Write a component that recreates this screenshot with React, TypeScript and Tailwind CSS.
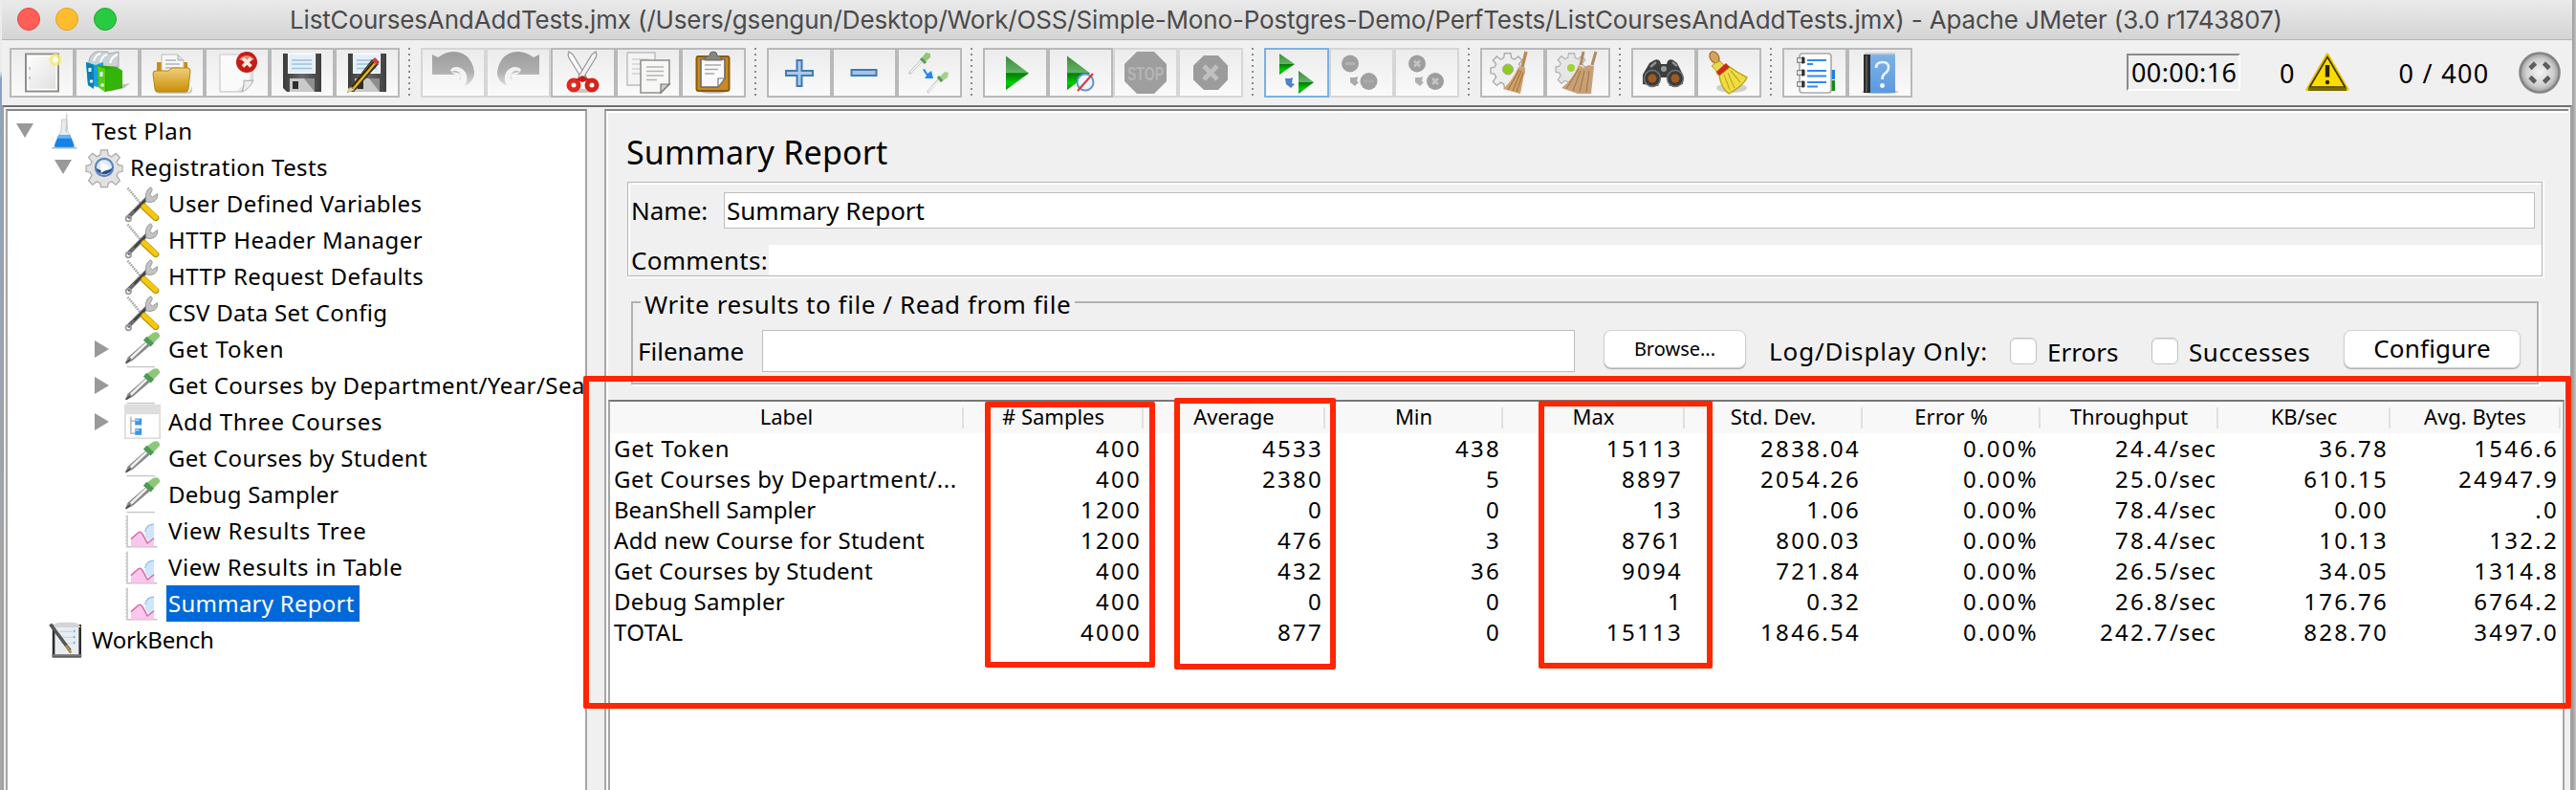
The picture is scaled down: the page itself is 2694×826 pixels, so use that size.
import type { ReactNode } from "react";

function Svg({ children, className = "w-[44px] h-[44px]" }: { children: ReactNode; className?: string }) {
  return (
    <svg viewBox="0 0 44 44" className={`${className} shrink-0 block overflow-visible`} fill="none">
      {children}
    </svg>
  );
}

function Defs() {
  return (
    <svg width="0" height="0" className="absolute">
      <defs>
        <linearGradient id="gold" x1="0" y1="0" x2="0" y2="1">
          <stop offset="0" stopColor="#f0cf7c" /><stop offset="1" stopColor="#c98f06" />
        </linearGradient>
        <linearGradient id="play" x1="0" y1="0" x2="0" y2="1">
          <stop offset="0" stopColor="#3d8a3d" /><stop offset="0.48" stopColor="#5fb463" />
          <stop offset="0.52" stopColor="#067a06" /><stop offset="0.8" stopColor="#00d000" /><stop offset="1" stopColor="#0a8a0a" />
        </linearGradient>
        <linearGradient id="dark" x1="0" y1="0" x2="1" y2="0">
          <stop offset="0" stopColor="#3a3a3a" /><stop offset="0.5" stopColor="#6a6a6a" /><stop offset="1" stopColor="#3f3f3f" />
        </linearGradient>
        <linearGradient id="paper" x1="0" y1="0" x2="1" y2="1">
          <stop offset="0" stopColor="#ffffff" /><stop offset="1" stopColor="#dedede" />
        </linearGradient>
        <linearGradient id="gray" x1="0" y1="0" x2="0" y2="1">
          <stop offset="0" stopColor="#9d9d9d" /><stop offset="0.6" stopColor="#b0b0b0" /><stop offset="1" stopColor="#dedede" />
        </linearGradient>
        <linearGradient id="blue" x1="0" y1="0" x2="0" y2="1">
          <stop offset="0" stopColor="#7fb2e6" /><stop offset="1" stopColor="#5a9ae0" />
        </linearGradient>
        <radialGradient id="ball">
          <stop offset="0" stopColor="#f4f4f4" /><stop offset="0.7" stopColor="#cfcfcf" /><stop offset="1" stopColor="#9a9a9a" />
        </radialGradient>
      </defs>
    </svg>
  );
}

const gearPath =
  "M18 1h8l1 6 4 2 5-4 5 5-4 5 2 4 5 1v7l-5 1-2 4 4 6-5 5-5-4-4 2-1 5h-8l-1-5-4-2-5 4-5-5 4-6-2-4-5-1v-7l5-1 2-4-4-5 5-5 5 4 4-2z";

const NewIcon = () => (
  <Svg>
    <rect x="5" y="2.5" width="34" height="39" fill="url(#paper)" stroke="#8e9088" strokeWidth="2" />
    <rect x="7" y="4.5" width="30" height="35" stroke="#fff" strokeWidth="1.4" />
    <path d="M9 16v3M9 26v3" stroke="#aaa" strokeWidth="1.2" />
    <circle cx="36" cy="8.5" r="6.5" fill="#f7ea7c" opacity="0.85" />
    <circle cx="36" cy="8.5" r="3" fill="#fffef0" />
  </Svg>
);
const TemplatesIcon = () => (
  <Svg>
    <path d="M28 36l18-3-6 5-16 4z" fill="#8a8a8a" opacity="0.5" />
    <path d="M3 10q1-8 8-10h11l3 2 9-2v16H3z" fill="#cbd1d4" stroke="#a5abae" />
    <path d="M8 10q2-7 7-8M15 11q2-7 7-8M25 12q2-7 8-9" stroke="#fff" strokeWidth="2" />
    <path d="M0 11l10 3 8-3v27L2 35z" fill="#16a2dc" />
    <path d="M0 11l8 3v25l-6-4z" fill="#0d7db5" />
    <path d="M12 14l20 2 6 4v18l-18 4-7-5z" fill="#2aa600" />
    <path d="M12 15l8 3v24l-7-5z" fill="#59cf12" />
    <path d="M21 19l11-3 6 5v16l-17 4z" fill="#35b408" />
    <path d="M4 17v4M16 21v5" stroke="#dff" strokeWidth="3" />
    <circle cx="5.5" cy="31" r="1.8" fill="#fff" /><circle cx="17" cy="35" r="1.8" fill="#fff" />
  </Svg>
);
const OpenIcon = () => (
  <Svg>
    <path d="M4 42h36l3-6v6q-2 2-6 2H8z" fill="#999" opacity="0.5" />
    <path d="M6 11h7v20h18V11h7l1 28H6z" fill="#c78f12" />
    <path d="M11 3h17l6 6v14H11z" fill="#f7f7f7" stroke="#bdbdbd" />
    <path d="M28 3v6h6" fill="#ddd" stroke="#aaa" />
    <path d="M15 9h11M15 13h15M15 17h15" stroke="#b4b4b4" strokeWidth="1.6" />
    <path d="M2 23q0-3 3-3h13l4-3h16q3 0 3 3l-2 19q0 3-3 3H7q-3 0-3-3z" fill="url(#gold)" stroke="#b98410" />
  </Svg>
);
const CloseIcon = () => (
  <Svg>
    <path d="M4 3h34v27q-10 2-11 12H4z" fill="url(#paper)" stroke="#c4c4c4" />
    <path d="M5 4h30v24L22 41H5z" fill="#fafafa" />
    <path d="M39 30q-6 1-10 0 1 6-2 12 8-3 12-12z" fill="#ededed" stroke="#aaa" />
    <circle cx="32" cy="11" r="11" fill="#c71c14" />
    <path d="M24 8q8-8 16 0-8 4-16 0z" fill="#ea8a80" />
    <path d="M28 7l8.500 8.500M36.500 7L28 15.500" stroke="#ffe9dc" strokeWidth="3.600" />
  </Svg>
);
function Floppy() {
  return (
    <>
      <path d="M2 2h40v40H6l-4-4z" fill="url(#dark)" />
      <rect x="7.500" y="2.500" width="28" height="20" fill="#e3f0fa" stroke="#fff" />
      <path d="M11 9h21M11 13h21M11 17.500h21" stroke="#9fc0dc" strokeWidth="1.300" />
      <rect x="9" y="28" width="26" height="14" fill="#c9c9c9" />
      <path d="M24 28l11 14V28z" fill="#8e8e8e" />
      <rect x="12" y="31" width="6" height="8" fill="#2d2d2d" />
    </>
  );
}
const SaveIcon = () => <Svg><Floppy /></Svg>;
const SaveAsIcon = () => (
  <Svg>
    <Floppy />
    <path d="M3 39L27 8l7 5L9 40l-8 3z" fill="#333" />
    <path d="M5 37L29 8l4 3L9 40z" fill="#e2b72a" />
    <path d="M6 37L30 9" stroke="#3a2c05" strokeWidth="2" />
    <path d="M9 40L33 12" stroke="#3a2c05" strokeWidth="1.600" />
    <path d="M27 9l3-3 5 5-3 3z" fill="#d03b37" />
    <path d="M4 37l-3 6 8-3z" fill="#e8cf9a" />
  </Svg>
);
const undoPath = "M0 3L6 6Q14 0 22 0 33 0 39 8 44 15 44 24 43 31 34 36 38 28 35 22 32 17 26 16 21 16 19 19 21 24 26 24H0z";
const UndoIcon = () => (
  <Svg>
    <path d={undoPath} fill="url(#gray)" />
    <path d="M20 21q6-3 9 2 2 5-1 7 4-7-2-8z" fill="#b3b3b3" />
  </Svg>
);
const RedoIcon = () => (
  <Svg>
    <g transform="translate(44 0) scale(-1 1)">
      <path d={undoPath} fill="url(#gray)" />
      <path d="M20 21q6-3 9 2 2 5-1 7 4-7-2-8z" fill="#b3b3b3" />
    </g>
  </Svg>
);
const CutIcon = () => (
  <Svg>
    <ellipse cx="22" cy="41" rx="12" ry="2" fill="#c8c8c8" />
    <path d="M7 0q-2 4 1 8l13 21 4-3L11 3z" fill="#fbfbfb" stroke="#9c9c9c" strokeWidth="1.300" />
    <path d="M35 0q2 4-1 8L21 29l-4-3L31 3z" fill="#f2f2f2" stroke="#9c9c9c" strokeWidth="1.300" />
    <ellipse cx="12" cy="35" rx="5" ry="5" stroke="#e0291f" strokeWidth="5" />
    <ellipse cx="31" cy="35" rx="5" ry="5" stroke="#d5231a" strokeWidth="5" />
    <path d="M14 29l7-4 8 4-8 3z" fill="#c41d14" />
  </Svg>
);
const CopyIcon = () => (
  <Svg>
    <path d="M0 1h29v34H0z" fill="#f4f4f4" stroke="#bcbcbc" strokeWidth="1.400" />
    <path d="M5 8h18M5 13h8M5 18h8M5 23h8" stroke="#d2d2d2" strokeWidth="1.400" />
    <path d="M14 9h30v25l-9 9H14z" fill="#f7f7f5" stroke="#8f918b" strokeWidth="1.600" />
    <path d="M20 16h18M20 20.500h18M20 25h18M20 29.500h11" stroke="#b4b4b4" strokeWidth="1.400" />
    <path d="M44 34h-9v9z" fill="#ccc" stroke="#777" strokeWidth="1.200" />
  </Svg>
);
const PasteIcon = () => (
  <Svg>
    <ellipse cx="22" cy="42" rx="13" ry="1.800" fill="#bbb" />
    <rect x="4.500" y="5" width="34" height="36" rx="2" fill="#c98a24" stroke="#8a5a08" strokeWidth="2" />
    <path d="M9 8h25v20l-7 9H9z" fill="#fafafa" stroke="#6a6a68" strokeWidth="1.600" />
    <path d="M13 14h17M13 18.500h14M13 23h10" stroke="#a9a9a9" strokeWidth="1.400" />
    <path d="M34 28h-7v9z" fill="#fff" stroke="#777" strokeWidth="1.200" />
    <path d="M13 9q0-4 5-5 0-4 4-4t4 4q5 1 5 5z" fill="#85867f" stroke="#666" />
  </Svg>
);
const PlusIcon = () => (
  <Svg>
    <path d="M19.500 9h5v11H36v5H24.500v11h-5V25H8v-5h11.500z" fill="#a9c9ea" stroke="#3f7ab8" strokeWidth="2" />
  </Svg>
);
const MinusIcon = () => (
  <Svg>
    <rect x="8.500" y="19" width="26" height="6" fill="#a3c5e8" stroke="#3f7ab8" strokeWidth="2" />
  </Svg>
);
const ToggleIcon = () => (
  <Svg>
    <path d="M1 23L15 8" stroke="#c2c2c2" strokeWidth="3" /><path d="M2 22L15 8" stroke="#f6f6f6" strokeWidth="1.400" />
    <path d="M13 8l5-7 5 1 0 4-7 6z" fill="#8fc878" /><path d="M13 7l5 5" stroke="#5a9a5a" strokeWidth="3" />
    <path d="M20 43l12-14" stroke="#cfcfcf" strokeWidth="3" /><path d="M21 42l12-13" stroke="#f6f6f6" strokeWidth="1.400" />
    <path d="M31 28l7-7 4 1-1 5-7 5z" fill="#a3d28e" /><path d="M31 26l4 5" stroke="#5a9a5a" strokeWidth="3" />
    <path d="M17 18l3 5 4-3 2 8h-9l2-3-4-6z" fill="#1e8af7" />
  </Svg>
);
const PlayIcon = () => <Svg><path d="M12 4.500L36 22.500 12 40z" fill="url(#play)" /></Svg>;
const PlayNoPauseIcon = () => (
  <Svg>
    <path d="M8 4.500L32 22.500 8 40z" fill="url(#play)" />
    <circle cx="27" cy="32" r="8.500" fill="#eef3fa" stroke="#5e97d6" strokeWidth="2" />
    <path d="M19 41l16-18" stroke="#d33" strokeWidth="2" />
  </Svg>
);
const StopIcon = () => (
  <Svg>
    <path d="M13 0h18l13 13v18L31 44H13L0 31V13z" fill="#9e9e9e" />
    <text x="22" y="29.500" textAnchor="middle" fontFamily="Liberation Sans" fontWeight="700" fontSize="20" textLength="38" lengthAdjust="spacingAndGlyphs" fill="#b5b5b5">STOP</text>
  </Svg>
);
const ShutdownIcon = () => (
  <Svg>
    <path d="M15 4h15l10 10.500v15L30 40H15L4 29.500v-15z" fill="#9c9c9c" />
    <path d="M15 15l14 14M29 15L15 29" stroke="#bfbfbf" strokeWidth="5" />
  </Svg>
);
const RemoteStartIcon = () => (
  <Svg>
    <path d="M4 2l16 11L4 24z" fill="url(#play)" /><path d="M24 20l16 12-16 12z" fill="url(#play)" />
    <path d="M10 28h5l3-1-1 6 3 1-4 4-5-4z" fill="#4f81c4" />
  </Svg>
);
const RemoteStopIcon = () => (
  <Svg>
    <circle cx="10" cy="12.500" r="9" fill="#a0a0a0" /><path d="M5 12.500h10" stroke="#b3b3b3" strokeWidth="3" />
    <circle cx="29.500" cy="31" r="9" fill="#a0a0a0" /><path d="M24 31h11" stroke="#aaa" strokeWidth="3" />
    <path d="M10 27h5l3-1-1 5 2 1-4 4-5-4z" fill="#aaa" />
  </Svg>
);
const RemoteShutdownIcon = () => (
  <Svg>
    <circle cx="12" cy="12.500" r="9" fill="#9e9e9e" /><path d="M9 9.500l6 6M15 9.500l-6 6" stroke="#c4c4c4" strokeWidth="2.600" />
    <circle cx="31" cy="31" r="9" fill="#9e9e9e" /><path d="M28 28l6 6M34 28l-6 6" stroke="#c4c4c4" strokeWidth="2.600" />
    <path d="M10 27h5l3-1-1 5 2 1-4 4-5-4z" fill="#b0b0b0" />
  </Svg>
);
const ClearIcon = () => (
  <Svg>
    <g transform="translate(-1 1) scale(0.8)"><path d={gearPath} fill="#eeeeee" stroke="#adadad" strokeWidth="1.800" /></g>
    <circle cx="17" cy="18.500" r="5.500" fill="#8fcb1e" stroke="#a9a9a9" />
    <path d="M36 0l-4 16" stroke="#b98a4e" strokeWidth="3.400" />
    <path d="M28 16l7 2-5 26-18-5q10-9 16-23z" fill="#cfa068" />
    <path d="M29 19L17 40M31 20l-9 21M33 22l-7 20" stroke="#9a6d3b" strokeWidth="1" />
  </Svg>
);
const ClearAllIcon = () => (
  <Svg>
    <g transform="translate(-1 1) scale(0.75)"><path d={gearPath} fill="#e6e6e6" stroke="#b6b6b6" strokeWidth="1.800" /></g>
    <circle cx="15" cy="17" r="4" fill="#9ed33a" />
    <path d="M28 0l-3 14M41 0l-4 14" stroke="#b08b62" strokeWidth="3" />
    <path d="M23 14l5 3 5-3 6 1-3 29H22L5 38q12-9 18-24z" fill="#c9a074" />
    <path d="M23 18L10 39M25 20L17 41M29 20l-5 22M34 20l-3 22" stroke="#9a744a" strokeWidth="1" />
  </Svg>
);
const SearchIcon = () => (
  <Svg>
    <path d="M12 9q4-2 6 1l1 3h6l1-3q2-3 6-1l4 3 6 12v10l-14 2-3-9h-6l-3 9-16-2V24l7-12z" fill="#3c3e3f" />
    <path d="M8 16l6-5M31 11l5 4" stroke="#8d8f90" strokeWidth="2.500" />
    <circle cx="10" cy="28" r="8.500" fill="#3a3a3a" stroke="#777" strokeWidth="1.400" /><circle cx="10" cy="28" r="4.500" fill="#a0591f" />
    <circle cx="34" cy="28" r="8.500" fill="#3a3a3a" stroke="#777" strokeWidth="1.400" /><circle cx="34" cy="28" r="4.500" fill="#a0591f" />
    <circle cx="22" cy="18" r="3" fill="#9a9a9a" />
  </Svg>
);
const BroomIcon = () => (
  <Svg>
    <ellipse cx="25" cy="38" rx="16" ry="5" fill="#cfcfcf" />
    <ellipse cx="7" cy="6" rx="4.500" ry="6.500" transform="rotate(-30 7 6)" fill="#d6a35b" stroke="#a9742c" strokeWidth="1.400" />
    <path d="M4 15q4-4 9-5l4 4 3 8-6 2-4 0q0-4-6-9z" fill="#e8d94e" stroke="#b9a21b" />
    <path d="M23 16q8 6 18 11-3 8-19 17Q14 38 12 25z" fill="#f0dd45" stroke="#bba317" strokeWidth="1.400" />
    <path d="M24 20l10 12M21 22l7 16M17 24l6 16" stroke="#c4ab1c" strokeWidth="1.200" />
    <path d="M9 21l10-9 4 4-11 9z" fill="#cf2b1b" />
  </Svg>
);
const FunctionIcon = () => (
  <Svg>
    <rect x="38" y="19" width="5" height="10" fill="#1d7df0" /><rect x="38" y="30" width="5" height="11" fill="#158a15" />
    <rect x="6" y="2" width="33" height="41" rx="3" fill="#fff" stroke="#a9a9a9" strokeWidth="1.600" />
    <path d="M3 9h9M3 22h9M3 34h9" stroke="#888" strokeWidth="6" /><path d="M4 9h5M4 22h5M4 34h5" stroke="#e9e9e9" strokeWidth="3.500" />
    <path d="M9.500 5.500v7M9.500 18.500v7M9.500 30.500v7" stroke="#111" strokeWidth="2" />
    <path d="M14 9h20M14 13h6M14 20h20M14 25.500h20M14 32h20M14 36.500h11" stroke="#2a8bf2" strokeWidth="1.800" />
  </Svg>
);
const HelpIcon = () => (
  <Svg>
    <ellipse cx="22" cy="42" rx="19" ry="2" fill="#bbb" />
    <path d="M6 1h32v4H6z" fill="#c9cdd4" /><rect x="5" y="3" width="33" height="40" rx="1" fill="url(#blue)" />
    <rect x="5" y="3" width="7" height="40" fill="#2b2b2b" /><path d="M8 4v38" stroke="#555" strokeWidth="2" />
    <path d="M18 17q0-6 7-6 6 0 6 5.500 0 4-4 6.500-2.500 2-2.500 6" stroke="#eaf3fd" strokeWidth="2.600" />
    <circle cx="24.500" cy="35.500" r="2.400" fill="#fff" />
  </Svg>
);
const WarningIcon = () => (
  <Svg>
    <path d="M22 3L43 39.500H1z" fill="#f8d800" stroke="#e8c200" strokeWidth="3" strokeLinejoin="round" />
    <path d="M22 5.500L40.500 37h-37z" stroke="#3a3400" strokeWidth="1.600" fill="#fbdc00" />
    <path d="M2 39.500h40" stroke="#7a6a00" strokeWidth="3" />
    <path d="M22 14v12.500" stroke="#2a2600" strokeWidth="4.400" /><circle cx="22" cy="32" r="2.200" fill="#2a2600" />
  </Svg>
);
const StatusIcon = () => (
  <Svg>
    <circle cx="22" cy="22" r="20.500" fill="url(#ball)" stroke="#858585" strokeWidth="2.600" />
    <path d="M12 17.500l5.500-5.500M26.500 12l5.500 5.500M12 26.500l5.500 5.500M32 26.500L26.500 32" stroke="#5d5d5d" strokeWidth="4.600" />
  </Svg>
);

const treeIcon = "w-[38px] h-[38px]";
const FlaskIcon = () => (
  <Svg className={treeIcon}>
    <path d="M17 8h6l1 14 7 14q1 4-2 4H11q-3 0-2-4l7-14z" fill="#e6edf3" stroke="#b9c3cc" />
    <path d="M13 27h14l5 13q0 2-2 2H10q-2 0-2-2z" fill="#1583e6" /><path d="M13 27h14l1 4H12z" fill="#66b4f5" />
    <path d="M23 1l-1 22" stroke="#c9c9c9" strokeWidth="1.500" /><path d="M5 42.500h30" stroke="#a5bcd4" strokeWidth="2" />
  </Svg>
);
const GearIcon = () => (
  <Svg className={treeIcon}>
    <path d={gearPath} fill="#e2e2e2" stroke="#a8a8a8" strokeWidth="1.400" />
    <circle cx="22" cy="22" r="10.500" fill="#dfe8f3" stroke="#5a82bb" strokeWidth="2.500" />
    <path d="M12 23a10.500 10.500 0 0 0 20 0q-10 6-20 0z" fill="#25508f" /><path d="M18 15l11 7-11 7z" fill="#fff" />
  </Svg>
);
const ToolsIcon = () => (
  <Svg className={treeIcon}>
    <path d="M4 3l16 19" stroke="#a9a9a9" strokeWidth="3" strokeDasharray="2 1" />
    <path d="M4 39L28 15" stroke="#6b6b6b" strokeWidth="5" /><path d="M12 31L28 15" stroke="#3d3d3d" strokeWidth="2" />
    <circle cx="5" cy="40" r="3.200" stroke="#9a9a9a" strokeWidth="2" />
    <path d="M26 15q-1-9 6-13l2 3-3 6 3 3 6-4q1 8-7 10-3 1-7-1z" fill="#c4c4c4" stroke="#8c8c8c" />
    <path d="M24 26l14 13" stroke="#b98e00" strokeWidth="8" strokeLinecap="round" />
    <path d="M24 25.500l14 13" stroke="#f4c80d" strokeWidth="6" strokeLinecap="round" />
  </Svg>
);
const DropperIcon = () => (
  <Svg className={treeIcon}>
    <path d="M3 43.500h34" stroke="#c6c6c6" strokeWidth="1.600" />
    <path d="M1 40l3-8L26 13l5 5L10 36z" fill="#8a8a8a" /><path d="M8 33L27 15" stroke="#f4f4f4" strokeWidth="2.800" />
    <path d="M2 39l5-4" stroke="#4a4a4a" strokeWidth="2" />
    <path d="M27 8l8-6q8-2 8 5l-8 8z" fill="#8cc878" /><path d="M25 9l9 8" stroke="#4e9a55" strokeWidth="6" />
  </Svg>
);
const ControllerIcon = () => (
  <Svg className={treeIcon}>
    <rect x="1" y="2" width="42" height="40" fill="#fff" stroke="#dcdcdc" strokeWidth="2" />
    <rect x="0" y="1" width="44" height="12" fill="#dedede" /><path d="M8 16v20h6M8 21h6" stroke="#a9a9a9" strokeWidth="1.500" />
    <rect x="13" y="18" width="8" height="8" fill="#3b95e6" /><rect x="13" y="30" width="8" height="8" fill="#3b95e6" />
    <path d="M13 20h5M13 32h5" stroke="#a8d6fa" strokeWidth="2" />
  </Svg>
);
const ListenerIcon = () => (
  <Svg className={treeIcon}>
    <path d="M3.500 3v38M2 41.500h38" stroke="#c4c4c4" strokeWidth="1.800" /><path d="M2 5v34" stroke="#999" strokeWidth="1" strokeDasharray="1 3" />
    <path d="M36 14q-9 0-11 9-1 8 5 11l6-2z" fill="#cfe5fb" /><path d="M36 14q-9 0-11 9" stroke="#8ebdee" strokeWidth="1.500" />
    <path d="M8 33L17 24q3-2 5 1l6 11 8-4v9H8z" fill="#fbc6ee" />
    <path d="M8 32L17 24q3-2 5 2l6 11 8-6" stroke="#d2689c" strokeWidth="1.600" />
  </Svg>
);
const WorkbenchIcon = () => (
  <Svg className={treeIcon}>
    <rect x="7" y="5" width="32" height="37" fill="#e9edf0" stroke="#2b2b2b" strokeWidth="3" /><path d="M5 41h36" stroke="#777" strokeWidth="3" />
    <path d="M5 7q2-6 12-6h12q8 0 11 6z" fill="#d4d4d4" /><path d="M14 12h16M14 19h18M16 26h16" stroke="#ccd6de" strokeWidth="1.300" />
    <path d="M3 3l24 32" stroke="#555" strokeWidth="4" /><path d="M22 29l6 9" stroke="#b58a4e" strokeWidth="3" />
    <path d="M32 10v3M32 17v3M32 24v3" stroke="#7db2e4" strokeWidth="2" />
  </Svg>
);

type Tool = { icon: () => ReactNode; off?: boolean; active?: boolean };
const groups: Tool[][] = [
  [{ icon: NewIcon }, { icon: TemplatesIcon }, { icon: OpenIcon }, { icon: CloseIcon }, { icon: SaveIcon }, { icon: SaveAsIcon }],
  [{ icon: UndoIcon, off: true }, { icon: RedoIcon, off: true }, { icon: CutIcon }, { icon: CopyIcon }, { icon: PasteIcon }],
  [{ icon: PlusIcon }, { icon: MinusIcon }, { icon: ToggleIcon }],
  [{ icon: PlayIcon }, { icon: PlayNoPauseIcon }, { icon: StopIcon, off: true }, { icon: ShutdownIcon, off: true }],
  [{ icon: RemoteStartIcon, active: true }, { icon: RemoteStopIcon, off: true }, { icon: RemoteShutdownIcon, off: true }],
  [{ icon: ClearIcon }, { icon: ClearAllIcon }],
  [{ icon: SearchIcon }, { icon: BroomIcon }],
  [{ icon: FunctionIcon }, { icon: HelpIcon }],
];

function ToolButton({ icon: Icon, off, active }: Tool) {
  const border = active ? "border-[#7fb0dc]" : off ? "border-[#d6d6d6]" : "border-[#b9b9b9]";
  return (
    <button className={`flex h-[52px] w-[68px] items-center justify-center border-2 bg-linear-to-b from-[#ececec] to-[#fafafa] ${border}`}>
      <Icon />
    </button>
  );
}

function Toolbar() {
  return (
    <div className="flex h-[68px] shrink-0 items-start bg-[#f0f0f0] pt-2 pl-2">
      {groups.map((g, i) => (
        <div key={i} className="flex">
          {i > 0 && <div className="mr-[11px] ml-[9px] h-[50px] w-[2px] bg-[repeating-linear-gradient(to_bottom,#8c8c8c_0_2px,transparent_2px_6px)]" />}
          {g.map((t, j) => (
            <ToolButton key={j} {...t} />
          ))}
        </div>
      ))}
      <div className="mt-[6px] ml-[224px] flex h-[39px] w-[119px] items-center border-2 border-t-[#8a8a8a] border-r-white border-b-white border-l-[#8a8a8a] pt-[2px] pl-[3px] text-[27px] tracking-[0.4px]">
        00:00:16
      </div>
      <div className="mt-[5px] ml-[41px] flex h-[44px] items-center text-[27px]">0</div>
      <div className="mt-1 ml-[13px]"><WarningIcon /></div>
      <div className="mt-[5px] ml-[52px] flex h-[44px] w-[126px] items-center text-[27px] tracking-[1.3px]">0 / 400</div>
      <div className="mt-1"><StatusIcon /></div>
    </div>
  );
}

type Node = { label: string; level: 0 | 1 | 2; icon: () => ReactNode; state?: "open" | "closed"; selected?: boolean; spacing?: string };
const tree: Node[] = [
  { label: "Test Plan", level: 0, icon: FlaskIcon, state: "open", spacing: "tracking-[0.55px]" },
  { label: "Registration Tests", level: 1, icon: GearIcon, state: "open" },
  { label: "User Defined Variables", level: 2, icon: ToolsIcon },
  { label: "HTTP Header Manager", level: 2, icon: ToolsIcon, spacing: "tracking-[0.5px]" },
  { label: "HTTP Request Defaults", level: 2, icon: ToolsIcon, spacing: "tracking-[0.45px]" },
  { label: "CSV Data Set Config", level: 2, icon: ToolsIcon, spacing: "tracking-[0.3px]" },
  { label: "Get Token", level: 2, icon: DropperIcon, state: "closed", spacing: "tracking-[0.9px]" },
  { label: "Get Courses by Department/Year/Sea", level: 2, icon: DropperIcon, state: "closed", spacing: "tracking-[0.45px]" },
  { label: "Add Three Courses", level: 2, icon: ControllerIcon, state: "closed", spacing: "tracking-[0.65px]" },
  { label: "Get Courses by Student", level: 2, icon: DropperIcon, spacing: "tracking-[0.3px]" },
  { label: "Debug Sampler", level: 2, icon: DropperIcon, spacing: "tracking-[0.25px]" },
  { label: "View Results Tree", level: 2, icon: ListenerIcon, spacing: "tracking-[0.75px]" },
  { label: "View Results in Table", level: 2, icon: ListenerIcon, spacing: "tracking-[0.6px]" },
  { label: "Summary Report", level: 2, icon: ListenerIcon, selected: true, spacing: "tracking-[0.25px]" },
  { label: "WorkBench", level: 0, icon: WorkbenchIcon, spacing: "tracking-[-0.2px]" },
];
const indent = ["pl-[8px]", "pl-[48px]", "pl-[88px]"];

function TreeRow({ label, level, icon: Icon, state, selected, spacing = "tracking-[0.4px]" }: Node) {
  return (
    <div className={`flex h-[38px] items-center whitespace-nowrap ${indent[level]}`}>
      <svg viewBox="0 0 20 20" className="h-5 w-[20px] shrink-0" fill="#999">
        {state === "open" && <path d="M1 2h18L10 17z" />}
        {state === "closed" && <path d="M3 1l15 9-15 9z" />}
      </svg>
      <div className="w-[14px] shrink-0" />
      <Icon />
      <div className={`ml-[6px] h-[38px] pr-[5px] pl-[2px] text-[24px] leading-[38px] ${spacing} ${selected ? "bg-[#0069d9] text-white" : ""}`}>{label}</div>
    </div>
  );
}

const columns = [
  { name: "Label", w: "w-[370px]" },
  { name: "# Samples", w: "w-[188px]" },
  { name: "Average", w: "w-[190px]" },
  { name: "Min", w: "w-[186px]" },
  { name: "Max", w: "w-[190px]" },
  { name: "Std. Dev.", w: "w-[186px]" },
  { name: "Error %", w: "w-[186px]" },
  { name: "Throughput", w: "w-[186px]" },
  { name: "KB/sec", w: "w-[180px]" },
  { name: "Avg. Bytes", w: "w-[178px]" },
];
const rows = [
  ["Get Token", "400", "4533", "438", "15113", "2838.04", "0.00%", "24.4/sec", "36.78", "1546.6"],
  ["Get Courses by Department/...", "400", "2380", "5", "8897", "2054.26", "0.00%", "25.0/sec", "610.15", "24947.9"],
  ["BeanShell Sampler", "1200", "0", "0", "13", "1.06", "0.00%", "78.4/sec", "0.00", ".0"],
  ["Add new Course for Student", "1200", "476", "3", "8761", "800.03", "0.00%", "78.4/sec", "10.13", "132.2"],
  ["Get Courses by Student", "400", "432", "36", "9094", "721.84", "0.00%", "26.5/sec", "34.05", "1314.8"],
  ["Debug Sampler", "400", "0", "0", "1", "0.32", "0.00%", "26.8/sec", "176.76", "6764.2"],
  ["TOTAL", "4000", "877", "0", "15113", "1846.54", "0.00%", "242.7/sec", "828.70", "3497.0"],
];
const labelSpacing = [
  "tracking-[0.9px]",
  "tracking-[0.6px]",
  "tracking-[0px]",
  "tracking-[0.3px]",
  "tracking-[0.3px]",
  "tracking-[0.3px]",
  "tracking-[0.4px]",
];

function Value({ text }: { text: string }) {
  const [num, unit] = text.split("/");
  return (
    <>
      <span className="tracking-[2.3px]">{num}</span>
      {unit && <span className="tracking-[0.9px]">/{unit}</span>}
    </>
  );
}

function ResultsTable() {
  return (
    <div className="mt-4 w-[2046px] flex-1 border-t-2 border-r-2 border-l-2 border-t-[#777] border-r-[#a6a6a6] border-l-[#a6a6a6] bg-white pt-[2px]">
      <div className="flex h-[31px] w-[2040px] bg-[#f8f8f8] text-[22px] leading-[27px]">
        {columns.map((c) => (
          <div key={c.name} className={`flex shrink-0 justify-center ${c.w}`}>
            <span className="flex-1 pl-px text-center">{c.name}</span>
            <span className="mt-1 h-[22px] w-[2px] bg-[#e0e0e0]" />
          </div>
        ))}
      </div>
      {rows.map((r, ri) => (
        <div key={r[0]} className="flex h-8 text-[24px] leading-8">
          {r.map((v, i) => (
            <div key={i} className={`shrink-0 whitespace-nowrap ${columns[i].w} ${i === 0 ? `pl-[4px] ${labelSpacing[ri]}` : "pr-[2px] text-right"}`}>
              {i === 0 ? v : <Value text={v} />}
            </div>
          ))}
        </div>
      ))}
    </div>
  );
}

function Checkbox() {
  return <span className="h-[28px] w-[28px] rounded-[6px] border border-[#c2c2c2] bg-white shadow-[inset_0_1px_1px_#ddd]" />;
}

function ReportPanel() {
  return (
    <div className="flex w-[2054px] flex-col border-t-2 border-l-2 border-t-[#858585] border-l-[#a6a6a6] bg-[#f0f0f0] shadow-[inset_2px_2px_0_#fff]">
      <div className="flex flex-1 flex-col pt-[2px] pl-[2px]">
        <h1 className="mt-[18px] ml-[19px] h-[46px] text-[34px] leading-[46px] tracking-[0.2px]">Summary Report</h1>
        <div className="mt-2 ml-5 h-[99px] w-[2003px] border border-[#b4b4b4] pt-[10px] shadow-[1px_1px_0_1px_#fff,inset_1px_1px_0_1px_#fff]">
          <div className="flex h-[38px] items-center text-[26px]">
            <label className="w-[100px] pl-[3px]">Name:</label>
            <div className="flex h-[38px] w-[1894px] items-center border border-[#bdbdbd] bg-white pl-[2px]">Summary Report</div>
          </div>
          <div className="mt-[17px] flex h-8 items-center text-[26px] leading-8">
            <label className="w-[147px] pl-[3px] tracking-[0.3px]">Comments:</label>
            <div className="h-8 flex-1 bg-white" />
          </div>
        </div>
        <fieldset className="mt-[9px] ml-6 h-[104px] w-[1995px] border-2 border-[#b2b2b2] shadow-[2px_2px_0_#fff]">
          <legend className="ml-2 pt-1 pr-1 pl-1 text-[26px] leading-8 tracking-[0.58px]">Write results to file / Read from file</legend>
          <div className="mt-[11px] flex h-[44px] items-center text-[26px] leading-[42px]">
            <label className="w-[135px] pb-px pl-[5px]">Filename</label>
            <div className="h-[44px] w-[850px] border border-[#bdbdbd] bg-white" />
            <button className="mb-1 ml-[30px] flex h-[40px] w-[149px] items-center justify-center rounded-[8px] border border-[#d2d2d2] bg-white text-[20px] shadow-[0_1px_1px_#aaa]">Browse...</button>
            <span className="ml-[24px] w-[252px] pb-px tracking-[0.9px]">Log/Display Only:</span>
            <Checkbox />
            <span className="ml-[11px] w-[109px] pt-[2px]">Errors</span>
            <Checkbox />
            <span className="ml-[11px] w-[162px] pt-[2px] tracking-[0.6px]">Successes</span>
            <button className="mb-1 flex h-[40px] w-[185px] items-center justify-center rounded-[8px] border border-[#d2d2d2] bg-white pb-[2px] tracking-[0.2px] shadow-[0_1px_1px_#aaa]">Configure</button>
          </div>
        </fieldset>
        <ResultsTable />
      </div>
    </div>
  );
}

export default function App() {
  return (
    <div className="relative flex h-[826px] w-[2694px] overflow-hidden bg-[#e9e9e9] font-['Noto_Sans',sans-serif] text-black">
      <Defs />
      <div className="h-full w-[2px] bg-linear-to-b from-[#ececec] from-9% via-[#86a3c6] via-10% to-[#a8a8a8] to-80%" />
      <div className="flex h-full w-[2688px] flex-col overflow-hidden rounded-t-[10px] bg-[#f0f0f0]">
        <header className="flex h-[42px] shrink-0 items-center border-b border-[#b4b4b4] bg-linear-to-b from-[#eaeaea] to-[#d4d4d4]">
          <div className="ml-4 flex w-[285px] gap-4 pb-px">
            <span className="h-6 w-6 rounded-full border border-[#e2463f] bg-[#ff5f57]" />
            <span className="h-6 w-6 rounded-full border border-[#dfa023] bg-[#ffbd2e]" />
            <span className="h-6 w-6 rounded-full border border-[#1dad2b] bg-[#28ca42]" />
          </div>
          <div className="whitespace-nowrap font-[Inter,sans-serif] text-[26px] tracking-[-0.155px] text-[#4a4a4a]">
            ListCoursesAndAddTests.jmx (/Users/gsengun/Desktop/Work/OSS/Simple-Mono-Postgres-Demo/PerfTests/ListCoursesAndAddTests.jmx) - Apache JMeter (3.0 r1743807)
          </div>
        </header>
        <Toolbar />
        <main className="flex flex-1 border-t-2 border-r-2 border-l-2 border-[#a0a0a0] border-t-[#707070] pt-[2px] pl-[2px]">
          <nav className="w-[608px] shrink-0 border-t-2 border-r-2 border-l-2 border-[#a6a6a6] border-t-[#858585] bg-white pt-[2px]">
            {tree.map((n) => (
              <TreeRow key={n.label} {...n} />
            ))}
          </nav>
          <div className="w-[18px] shrink-0" />
          <ReportPanel />
        </main>
      </div>
      <div className="h-full w-[4px] bg-linear-to-r from-[#999] to-[#c4c4c4]" />
      <div className="absolute top-[393px] left-[610px] h-[348px] w-[2079px] rounded-[2px] border-[6px] border-[#ff2600]" />
      <div className="absolute top-[420px] left-[1030px] h-[278px] w-[178px] rounded-[2px] border-[6px] border-[#ff2600]" />
      <div className="absolute top-[416px] left-[1228px] h-[284px] w-[169px] rounded-[2px] border-[6px] border-[#ff2600]" />
      <div className="absolute top-[419px] left-[1609px] h-[280px] w-[182px] rounded-[2px] border-[6px] border-[#ff2600]" />
    </div>
  );
}
